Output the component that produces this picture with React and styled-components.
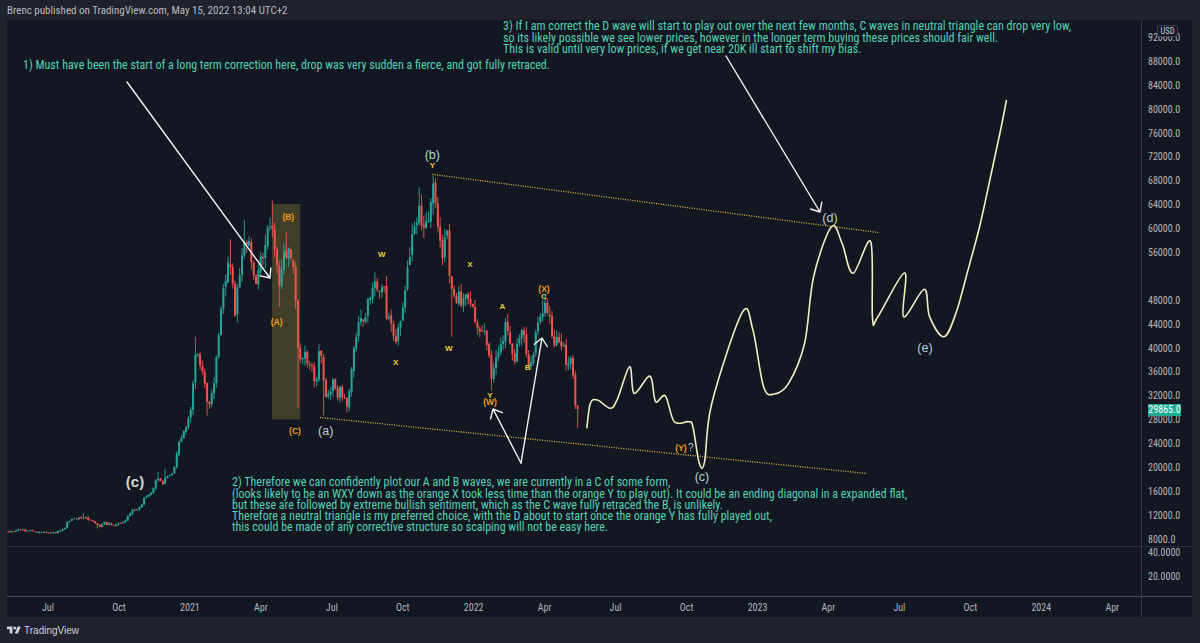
import React from 'react';
import styled, { createGlobalStyle } from 'styled-components';

const NARROW = `"Liberation Sans Narrow", "Roboto Condensed", "DejaVu Sans Condensed", "Liberation Sans", Arial, sans-serif`;
const SANS = `"Liberation Sans", Arial, sans-serif`;

const X0 = 7;
const Y0 = 20;
const mx = (m) => 48 + m * 23.65;
const py = (p) => 37.95 + (92 - p) * 5.975;

const GlobalStyle = createGlobalStyle`
  html, body { margin: 0; padding: 0; background: #1f222b; }
  body { width: 1200px; height: 643px; overflow: hidden; font-family: ${SANS}; }
`;

const Page = styled.div`
  width: 1200px;
  height: 643px;
  box-sizing: border-box;
  padding: 0 8px 0 7px;
  display: flex;
  flex-direction: column;
  background: #1f222b;
`;

const Header = styled.div`
  height: 20px;
  display: flex;
  align-items: center;
  font-family: ${NARROW};
  font-size: 11px;
  color: #b7bac1;
  white-space: nowrap;
`;

const Frame = styled.div`
  width: 1185px;
  height: 597px;
  display: grid;
  grid-template-columns: 1134px 51px;
  grid-template-rows: 526px 50px 21px;
  background: #131722;
`;

const MainPane = styled.div`
  position: relative;
  overflow: hidden;
`;

const Scale = styled.div`
  position: relative;
  overflow: hidden;
  border-left: 1px solid #363a45;
  border-top: ${(p) => (p.$top ? `1px solid ${p.$top}` : 'none')};
  display: flex;
  flex-direction: column;
  padding: ${(p) => p.$pad || '0'};
  box-sizing: border-box;
  font-family: ${NARROW};
  font-size: 10px;
  color: #b2b5be;
`;

const Tick = styled.div`
  flex-shrink: 0;
  height: ${(p) => p.$h}px;
  line-height: ${(p) => p.$h}px;
  padding-left: 6px;
  margin-bottom: ${(p) => p.$gap || 0}px;
  white-space: nowrap;
`;

const SubPane = styled.div`
  border-top: 1px solid ${(p) => p.$line};
  position: relative;
`;

const TimeAxis = styled.div`
  position: relative;
  border-top: 1px solid #4a4e59;
  font-family: ${NARROW};
  font-size: 10px;
  color: #b2b5be;
`;

const TimeLabel = styled.span`
  position: absolute;
  top: 50%;
  left: ${(p) => p.$x - X0}px;
  transform: translate(-50%, -50%);
  white-space: nowrap;
`;

const PriceBadge = styled.div`
  position: absolute;
  left: 6px;
  top: ${404 - Y0}px;
  width: 33px;
  height: 12px;
  line-height: 12px;
  background: #22ab94;
  color: #ffffff;
  text-align: center;
  font-size: 10px;
`;

const UsdBadge = styled.div`
  position: absolute;
  left: 15px;
  top: 5px;
  width: 19px;
  height: 10px;
  line-height: 10px;
  border: 1px solid #434651;
  border-radius: 3px;
  background: #131722;
  color: #d1d4dc;
  font-size: 8.5px;
  text-align: center;
`;

const Canvas = styled.svg`
  display: block;
  position: absolute;
  inset: 0;
`;

const Note = styled.div`
  position: absolute;
  left: ${(p) => p.$x - X0}px;
  top: ${(p) => p.$y - Y0}px;
  font-family: ${NARROW};
  font-size: 12px;
  line-height: 11.3px;
  color: #56d2b2;
  white-space: nowrap;
`;

const NoteLine = styled.div`
  height: 11.3px;
`;

const TONES = {
  wave: { color: '#b6d2dc', size: 12.5, weight: 400 },
  small: { color: '#b6d2dc', size: 10, weight: 400 },
  big: { color: '#cdd8d2', size: 15, weight: 700 },
  orange: { color: '#ef9b1c', size: 8.5, weight: 700 },
  yellow: { color: '#eccb36', size: 8, weight: 700 },
};

const Mark = styled.span`
  position: absolute;
  left: ${(p) => p.$x - X0}px;
  top: ${(p) => p.$y - Y0}px;
  transform: translate(-50%, -50%);
  white-space: nowrap;
  line-height: 1;
  font-family: ${SANS};
  font-size: ${(p) => TONES[p.$tone].size}px;
  font-weight: ${(p) => TONES[p.$tone].weight};
  color: ${(p) => TONES[p.$tone].color};
`;

const Footer = styled.div`
  height: 26px;
  display: flex;
  align-items: center;
  gap: 3px;
  font-family: ${SANS};
  font-size: 10px;
  color: #d1d4dc;
`;

/* ---------- chart data ---------- */
const KEYS = [
  [-1.8, 9.3], [-1.2, 9.7], [-0.6, 9.4], [0, 9.15], [0.3, 9.2], [0.7, 9.9], [0.85, 11.2], [1.1, 11.5],
  [1.5, 11.8], [1.8, 11.4], [2.1, 10.3], [2.4, 10.8], [2.7, 10.5], [3.0, 10.7], [3.3, 11.4], [3.6, 13.0],
  [3.9, 13.5], [4.1, 15.3], [4.4, 16.0], [4.65, 18.6], [4.9, 17.2], [5.0, 19.2], [5.3, 19.0], [5.5, 23.5],
  [5.8, 26.5], [6.0, 29.0], [6.25, 40.0], [6.55, 36], [6.7, 31], [7.0, 33.5], [7.3, 46.5], [7.7, 56.5],
  [7.9, 45.5], [8.35, 59.5], [8.8, 52], [9.2, 58], [9.45, 62.5], [9.75, 50], [10.1, 57], [10.35, 55],
  [10.45, 49.5], [10.6, 37], [10.85, 38.5], [11.1, 37], [11.3, 33], [11.5, 39.5], [11.7, 32.5], [12.0, 34],
  [12.4, 33], [12.65, 30.5], [13.0, 41.5], [13.45, 46.5], [13.75, 49.5], [14.2, 51], [14.3, 46], [14.7, 41.5],
  [15.0, 47], [15.3, 55.5], [15.65, 64.5], [15.9, 60], [16.3, 67], [16.6, 57], [16.9, 57.5], [17.1, 49],
  [17.5, 48.5], [17.7, 49], [17.9, 47.5], [18.2, 42.5], [18.5, 43], [18.75, 36], [19.0, 38.5], [19.35, 44],
  [19.75, 37.5], [20.0, 44], [20.25, 38.5], [20.5, 39], [20.9, 47], [21.2, 45.5], [21.4, 40], [21.7, 41.5],
  [21.85, 38.5], [22.05, 38.5], [22.2, 36], [22.3, 31], [22.38, 29], [22.5, 29.9],
];

const EXTREMES = [
  [1.5, 12.4], [2.1, 9.9], [4.65, 19.4], [5.0, 19.9], [6.25, 42], [6.7, 28.8], [7.7, 58.3], [8.35, 61.5],
  [9.45, 64.8], [9.75, 47], [10.1, 59.5], [10.6, 30], [11.7, 28.8], [12.65, 29.3], [15.65, 67], [16.3, 69],
  [17.1, 42], [18.75, 33], [20.9, 48.2], [22.35, 26.7],
];

function interp(m) {
  if (m <= KEYS[0][0]) return KEYS[0][1];
  for (let i = 0; i < KEYS.length - 1; i++) {
    const [a, pa] = KEYS[i];
    const [b, pb] = KEYS[i + 1];
    if (m >= a && m <= b) return pa + ((pb - pa) * (m - a)) / (b - a);
  }
  return KEYS[KEYS.length - 1][1];
}

function makeCandles() {
  let s = 48271;
  const rand = () => {
    s = (s * 16807) % 2147483647;
    return s / 2147483647;
  };
  const gauss = () => (rand() + rand() + rand() - 1.5) * 1.15;
  const step = 3 / 30.44;
  const out = [];
  let prev = interp(-1.75);
  for (let m = -1.75; m <= 22.46; m += step) {
    const t = interp(m);
    const vol = m > 6 ? 0.032 : 0.02;
    const close = t * (1 + gauss() * vol);
    const open = prev * (1 + gauss() * 0.005);
    const hi = Math.max(open, close) * (1 + rand() * vol);
    const lo = Math.min(open, close) * (1 - rand() * vol);
    out.push({ m, open, close, hi, lo });
    prev = close;
  }
  const last = out[out.length - 1];
  last.close = 29.865;
  last.hi = Math.max(last.hi, last.close);
  EXTREMES.forEach(([m, p]) => {
    let best = out[0];
    out.forEach((c) => {
      if (Math.abs(c.m - m) < Math.abs(best.m - m)) best = c;
    });
    if (p > best.hi) best.hi = p;
    if (p < best.lo) best.lo = p;
  });
  return out;
}

const CANDLES = makeCandles();

function smoothPath(pts) {
  let d = `M${pts[0][0]},${pts[0][1]}`;
  for (let i = 0; i < pts.length - 1; i++) {
    const p0 = pts[i - 1] || pts[i];
    const p1 = pts[i];
    const p2 = pts[i + 1];
    const p3 = pts[i + 2] || p2;
    const c1 = [p1[0] + (p2[0] - p0[0]) / 6, p1[1] + (p2[1] - p0[1]) / 6];
    const c2 = [p2[0] - (p3[0] - p1[0]) / 6, p2[1] - (p3[1] - p1[1]) / 6];
    d += ` C${c1[0].toFixed(1)},${c1[1].toFixed(1)} ${c2[0].toFixed(1)},${c2[1].toFixed(1)} ${p2[0]},${p2[1]}`;
  }
  return d;
}

const CURVE = [
  [586.8, 428.3], [590.4, 403.3], [597.5, 400], [610, 408.3], [617, 400], [629.6, 366.7], [634, 393.3],
  [647.5, 377.3], [651.8, 380], [655.7, 401.7], [665.4, 396], [674.3, 421.7], [688.6, 421.7], [692.9, 426.7],
  [699.3, 463.3], [704.6, 461.7], [711.8, 403.3], [742.1, 312.7], [752.9, 330], [763.6, 386.7], [774.3, 394],
  [788.6, 383.3], [804.6, 343.3], [813.6, 276.7], [831.4, 226.7], [842.1, 243.3], [852.9, 273.3],
  [870.7, 241.7], [872.5, 318.3], [877.9, 316.7], [904.6, 272.7], [903.6, 316.7], [924.3, 289.3],
  [929.6, 316.7], [943.9, 336.7], [956, 313], [968, 270], [980, 225], [992, 170], [1001, 128], [1006.5, 100],
];

function arrowPath(x1, y1, x2, y2, len = 10, spread = 0.72) {
  const a = Math.atan2(y2 - y1, x2 - x1);
  const l = [x2 - len * Math.cos(a - spread), y2 - len * Math.sin(a - spread)];
  const r = [x2 - len * Math.cos(a + spread), y2 - len * Math.sin(a + spread)];
  return `M${x1},${y1} L${x2},${y2} M${l[0]},${l[1]} L${x2},${y2} L${r[0]},${r[1]}`;
}

const ARROWS = [
  [127, 82, 270, 278],
  [726, 56, 820, 212],
  [521, 463, 493, 409],
  [521, 463, 542, 338],
];

const MARKS = [
  ['(c)', 135, 481, 'big'],
  ['(a)', 325.7, 431, 'wave'],
  ['(b)', 432.3, 155, 'wave'],
  ['(d)', 830, 218, 'wave'],
  ['(e)', 925, 348, 'wave'],
  ['(c)', 702, 477, 'wave'],
  ['?', 690.7, 448, 'small'],
  ['(B)', 288.3, 216.7, 'orange'],
  ['(A)', 276.7, 321.7, 'orange'],
  ['(C)', 295, 431, 'orange'],
  ['(W)', 490, 402.3, 'orange'],
  ['(X)', 544, 289, 'orange'],
  ['(Y)', 681, 448, 'orange'],
  ['Y', 432.3, 166, 'yellow'],
  ['W', 381.7, 255, 'yellow'],
  ['X', 395.7, 363, 'yellow'],
  ['W', 448.7, 349.3, 'yellow'],
  ['X', 470, 265, 'yellow'],
  ['A', 502.3, 307, 'yellow'],
  ['B', 527.7, 368.3, 'yellow'],
  ['Y', 490, 395.7, 'yellow'],
  ['C', 544, 297, 'yellow'],
];

const NOTE1 = ['1) Must have been the start of a long term correction here, drop was very sudden a fierce, and got fully retraced.'];
const NOTE2 = [
  '2) Therefore we can confidently plot our A and B waves, we are currently in a C of some form,',
  '(looks likely to be an WXY down as the orange X took less time than the orange Y to play out). It could be an ending diagonal in a expanded flat,',
  'but these are followed by extreme bullish sentiment, which as the C wave fully retraced the B, is unlikely.',
  'Therefore a neutral triangle is my preferred choice, with the D about to start once the orange Y has fully played out,',
  'this could be made of any corrective structure so scalping will not be easy here.',
];
const NOTE3 = [
  '3) If I am correct the D wave will start to play out over the next few months, C waves in neutral triangle can drop very low,',
  'so its likely possible we see lower prices, however in the longer term buying these prices should fair well.',
  'This is valid until very low prices, if we get near 20K ill start to shift my bias.',
];

const PRICE_TICKS = [];
for (let p = 92; p >= 8; p -= 4) PRICE_TICKS.push(p === 52 ? '' : `${p}000.0`);

const TIME_TICKS = [
  ['Jul', 0], ['Oct', 3], ['2021', 6], ['Apr', 9], ['Jul', 12], ['Oct', 15], ['2022', 18], ['Apr', 21],
  ['Jul', 24], ['Oct', 27], ['2023', 30], ['Apr', 33], ['Jul', 36], ['Oct', 39], ['2024', 42], ['Apr', 45],
];

function ChartDrawing() {
  return (
    <Canvas width="1134" height="526" viewBox={`${X0} ${Y0} 1134 526`}>
      <rect x="272" y="204" width="28.3" height="215.3" fill="rgba(200,180,60,0.25)" />
      {CANDLES.map((c, i) => {
        const x = mx(c.m);
        const up = c.close >= c.open;
        const col = up ? '#26a69a' : '#ef5350';
        const top = py(Math.max(c.open, c.close));
        const bot = py(Math.min(c.open, c.close));
        return (
          <g key={i}>
            <line x1={x} x2={x} y1={py(c.hi)} y2={py(c.lo)} stroke={col} strokeWidth="0.9" />
            <rect x={x - 1} y={top} width="2" height={Math.max(bot - top, 0.8)} fill={col} />
          </g>
        );
      })}
      <line x1="432.3" y1="174.3" x2="879.6" y2="232.7" stroke="#d6bf44" strokeWidth="1.3" strokeDasharray="1 1.4" />
      <line x1="320" y1="417.5" x2="867" y2="473.5" stroke="#d6bf44" strokeWidth="1.3" strokeDasharray="1 1.4" />
      <path d={smoothPath(CURVE)} fill="none" stroke="#f2eec4" strokeWidth="1.6" strokeLinejoin="round" />
      {ARROWS.map((a, i) => (
        <path key={i} d={arrowPath(...a)} fill="none" stroke="#f4f4f4" strokeWidth="1.4" strokeLinecap="round" strokeLinejoin="round" />
      ))}
    </Canvas>
  );
}

function TvLogo() {
  return (
    <svg width="14" height="8" viewBox="0 3 36 20">
      <path d="M14 22H7V11H0V4h14v18zM28 22h-8l7.5-18h8L28 22z" fill="#d1d4dc" />
      <circle cx="20" cy="8" r="4" fill="#d1d4dc" />
    </svg>
  );
}

export default function App() {
  return (
    <>
      <GlobalStyle />
      <Page>
        <Header>Brenc published on TradingView.com, May 15, 2022 13:04 UTC+2</Header>
        <Frame>
          <MainPane>
            <ChartDrawing />
            {MARKS.map(([t, x, y, tone], i) => (
              <Mark key={i} $x={x} $y={y} $tone={tone}>{t}</Mark>
            ))}
            <Note $x={23} $y={59.5}>
              {NOTE1.map((l, i) => <NoteLine key={i}>{l}</NoteLine>)}
            </Note>
            <Note $x={503} $y={21.3}>
              {NOTE3.map((l, i) => <NoteLine key={i}>{l}</NoteLine>)}
            </Note>
            <Note $x={232} $y={477.3}>
              {NOTE2.map((l, i) => <NoteLine key={i}>{l}</NoteLine>)}
            </Note>
          </MainPane>
          <Scale $pad="6px 0 0 0">
            {PRICE_TICKS.map((t, i) => (
              <Tick key={i} $h={23.9}>{t}</Tick>
            ))}
            <UsdBadge>USD</UsdBadge>
            <PriceBadge>29865.0</PriceBadge>
          </Scale>
          <SubPane $line="#2a2e39" />
          <Scale $top="#2a2e39">
            <Tick $h={12} $gap={12}>40.0000</Tick>
            <Tick $h={12}>20.0000</Tick>
          </Scale>
          <TimeAxis>
            {TIME_TICKS.map(([t, m], i) => (
              <TimeLabel key={i} $x={mx(m)}>{t}</TimeLabel>
            ))}
          </TimeAxis>
          <Scale $top="#4a4e59" />
        </Frame>
        <Footer>
          <TvLogo />
          <span>TradingView</span>
        </Footer>
      </Page>
    </>
  );
}
